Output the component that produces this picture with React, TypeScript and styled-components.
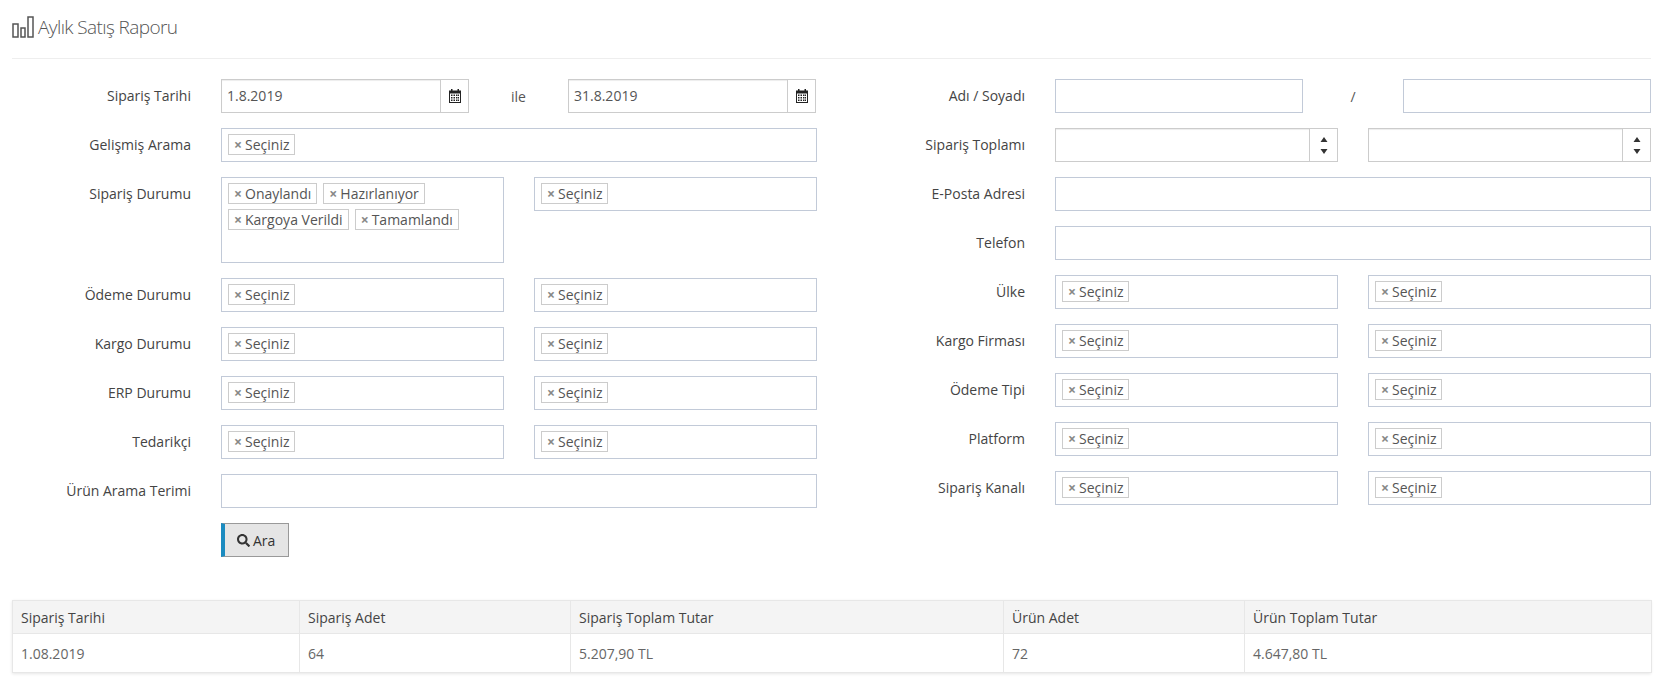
import React from "react"
import styled, { createGlobalStyle } from "styled-components"
import { FaSearch } from "react-icons/fa"

const GlobalStyle = createGlobalStyle`
html, body {
  margin: 0;
  padding: 0;
  background: #fff;
  font-family: "Open Sans", sans-serif;
  font-size: 14px;
  color: #333;
}
* { box-sizing: border-box; }
`

const Page = styled.div`
  width: 1671px;
  height: 691px;
  padding: 0 20px 0 12px;
  overflow: hidden;
`
const Header = styled.div`
  display: flex;
  align-items: center;
  gap: 3px;
  height: 59px;
  padding-bottom: 5px;
  border-bottom: 1px solid #eee;
  margin-bottom: 20px;
`
const Title = styled.h1`
  margin: 0;
  font-size: 19px;
  font-weight: 300;
  letter-spacing: -0.6px;
  color: #555;
`
const Form = styled.div`
  display: grid;
  grid-template-columns: 805px 804px;
  column-gap: 30px;
`
const Column = styled.div`
  display: flex;
  flex-direction: column;
  gap: 15px;
`
const Row = styled.div`
  display: grid;
  grid-template-columns: 1fr 596px;
  align-items: start;
`
const Label = styled.label`
  line-height: 34px;
  text-align: right;
  padding-right: 30px;
  color: #444;
`
const Pair = styled.div`
  display: grid;
  grid-template-columns: 283px 283px;
  column-gap: 30px;
  align-items: start;
`
const Joined = styled.div<{ $middle: number }>`
  display: grid;
  grid-template-columns: 248px ${p => p.$middle}px 248px;
  align-items: center;
`
const Joiner = styled.span`
  text-align: center;
  color: #555;
`
const TextBox = styled.div`
  height: 34px;
  border: 1px solid #c2cad8;
  background: #fff;
`
const AddonField = styled.div`
  display: flex;
  height: 34px;
  border: 1px solid #ccc;
  box-shadow: inset 0 1px 1px rgba(0, 0, 0, 0.075);
`
const FieldValue = styled.div`
  flex: 1;
  padding: 0 5px;
  line-height: 31px;
  color: #555;
`
const Addon = styled.div`
  width: 28px;
  display: flex;
  flex-direction: column;
  align-items: center;
  justify-content: center;
  border-left: 1px solid #ccc;
  background: #fff;
  color: #222;
`
const Select = styled.div<{ $tall?: boolean }>`
  display: flex;
  flex-wrap: wrap;
  align-content: flex-start;
  gap: 5px 6px;
  height: ${p => (p.$tall ? 86 : 34)}px;
  padding: 5px 6px;
  border: 1px solid #c2cad8;
`
const Tag = styled.span`
  display: inline-flex;
  align-items: center;
  height: 21px;
  padding: 0 5px;
  border: 1px solid #ccc;
  color: #555;
  line-height: 19px;
`
const TagX = styled.span`
  color: #888;
  font-weight: 700;
  margin-right: 3px;
`
const ActionRow = styled.div`
  padding-left: 209px;
`
const SearchButton = styled.button`
  display: inline-flex;
  align-items: center;
  gap: 3px;
  width: 68px;
  height: 34px;
  padding: 0 0 0 12px;
  background: #e5e5e5;
  border: 1px solid #999;
  border-left: 4px solid #1b8bc0;
  font: inherit;
  color: #333;
`
const TableCard = styled.div`
  margin-top: 43px;
  box-shadow: 0 1px 3px rgba(0, 0, 0, 0.1);
`
const Table = styled.table`
  width: 1639px;
  table-layout: fixed;
  border-collapse: collapse;
`
const HeadCell = styled.th`
  height: 33px;
  padding: 0 8px;
  background: #f4f4f4;
  border: 1px solid #e7e7e7;
  font-weight: 400;
  text-align: left;
  color: #444;
`
const BodyCell = styled.td`
  height: 39px;
  padding: 0 8px;
  border: 1px solid #e7e7e7;
  color: #666;
`

const BarsIcon = () => (
  <svg width="23" height="22" viewBox="0 0 23 22" fill="none" stroke="#555" strokeWidth="1.5">
    <rect x="1" y="8" width="5" height="13" />
    <rect x="9" y="12" width="4" height="9" />
    <rect x="16" y="1" width="5" height="20" />
  </svg>
)

const CalendarIcon = () => (
  <svg width="12" height="14" viewBox="0 0 12 14">
    <path fill="#222" fillRule="evenodd" d="M2 0h1.5v1.5h5V0H10v1.5h2V14H0V1.5h2zM1 4.5V13h10V4.5z" />
    <path fill="#222" d="M2 5.5h1.5V7H2zM4.5 5.5H6V7H4.5zM7 5.5h1.5V7H7zM9 5.5h1V7H9zM2 8h1.5v1.5H2zM4.5 8H6v1.5H4.5zM7 8h1.5v1.5H7zM9 8h1v1.5H9zM2 10.5h1.5V12H2zM4.5 10.5H6V12H4.5zM7 10.5h1.5V12H7zM9 10.5h1V12H9z" />
  </svg>
)

const Spinner = () => (
  <svg width="8" height="19" viewBox="0 0 8 19" fill="#333">
    <path d="M4 1l3.5 5h-7zM4 18l-3.5-5h7z" />
  </svg>
)

const Choice = ({ text = "Seçiniz" }: { text?: string }) => (
  <Tag>
    <TagX>×</TagX>
    {text}
  </Tag>
)

const Multi = ({ items, tall }: { items?: string[]; tall?: boolean }) => (
  <Select $tall={tall}>
    {(items ?? ["Seçiniz"]).map(item => (
      <Choice key={item} text={item} />
    ))}
  </Select>
)

const DateField = ({ value }: { value: string }) => (
  <AddonField>
    <FieldValue>{value}</FieldValue>
    <Addon>
      <CalendarIcon />
    </Addon>
  </AddonField>
)

const NumberField = () => (
  <AddonField>
    <FieldValue />
    <Addon>
      <Spinner />
    </Addon>
  </AddonField>
)

const pairLeft = ["Ödeme Durumu", "Kargo Durumu", "ERP Durumu", "Tedarikçi"]
const pairRight = ["Ülke", "Kargo Firması", "Ödeme Tipi", "Platform", "Sipariş Kanalı"]

const columns = [
  { title: "Sipariş Tarihi", value: "1.08.2019", width: 287 },
  { title: "Sipariş Adet", value: "64", width: 271 },
  { title: "Sipariş Toplam Tutar", value: "5.207,90 TL", width: 433 },
  { title: "Ürün Adet", value: "72", width: 241 },
  { title: "Ürün Toplam Tutar", value: "4.647,80 TL", width: 407 },
]

const PairRow = ({ label }: { label: string }) => (
  <Row>
    <Label>{label}</Label>
    <Pair>
      <Multi />
      <Multi />
    </Pair>
  </Row>
)

export default function App() {
  return (
    <Page>
      <GlobalStyle />
      <Header>
        <BarsIcon />
        <Title>Aylık Satış Raporu</Title>
      </Header>
      <Form>
        <Column>
          <Row>
            <Label>Sipariş Tarihi</Label>
            <Joined $middle={99}>
              <DateField value="1.8.2019" />
              <Joiner>ile</Joiner>
              <DateField value="31.8.2019" />
            </Joined>
          </Row>
          <Row>
            <Label>Gelişmiş Arama</Label>
            <Multi />
          </Row>
          <Row>
            <Label>Sipariş Durumu</Label>
            <Pair>
              <Multi tall items={["Onaylandı", "Hazırlanıyor", "Kargoya Verildi", "Tamamlandı"]} />
              <Multi />
            </Pair>
          </Row>
          {pairLeft.map(label => (
            <PairRow key={label} label={label} />
          ))}
          <Row>
            <Label>Ürün Arama Terimi</Label>
            <TextBox />
          </Row>
          <ActionRow>
            <SearchButton>
              <FaSearch size={13} />
              Ara
            </SearchButton>
          </ActionRow>
        </Column>
        <Column>
          <Row>
            <Label>Adı / Soyadı</Label>
            <Joined $middle={100}>
              <TextBox />
              <Joiner>/</Joiner>
              <TextBox />
            </Joined>
          </Row>
          <Row>
            <Label>Sipariş Toplamı</Label>
            <Pair>
              <NumberField />
              <NumberField />
            </Pair>
          </Row>
          <Row>
            <Label>E-Posta Adresi</Label>
            <TextBox />
          </Row>
          <Row>
            <Label>Telefon</Label>
            <TextBox />
          </Row>
          {pairRight.map(label => (
            <PairRow key={label} label={label} />
          ))}
        </Column>
      </Form>
      <TableCard>
        <Table>
          <colgroup>
            {columns.map(col => (
              <col key={col.title} width={col.width} />
            ))}
          </colgroup>
          <thead>
            <tr>
              {columns.map(col => (
                <HeadCell key={col.title}>{col.title}</HeadCell>
              ))}
            </tr>
          </thead>
          <tbody>
            <tr>
              {columns.map(col => (
                <BodyCell key={col.title}>{col.value}</BodyCell>
              ))}
            </tr>
          </tbody>
        </Table>
      </TableCard>
    </Page>
  )
}
